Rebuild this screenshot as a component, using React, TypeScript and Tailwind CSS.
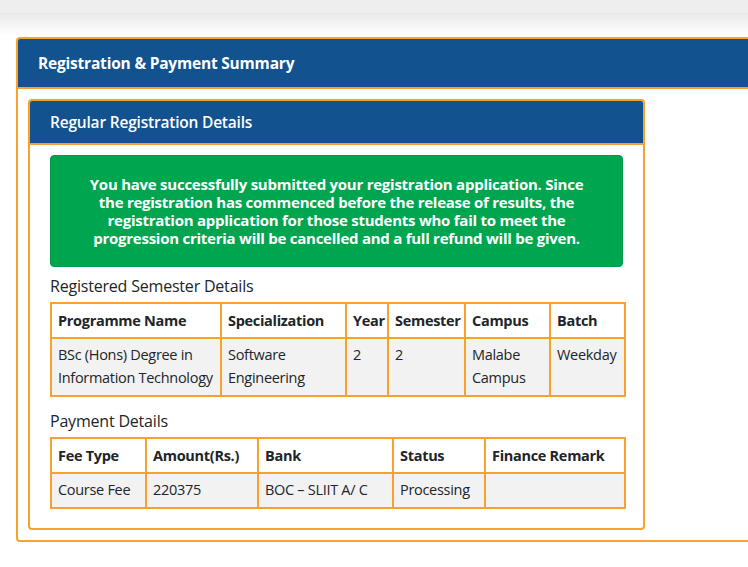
import React from "react"

const ORANGE = "border-[#f8a22c]"

const semesterCols = [
  { label: "Programme Name", w: "w-[170px]" },
  { label: "Specialization", w: "w-[125px]" },
  { label: "Year", w: "w-[42px]" },
  { label: "Semester", w: "w-[77px]" },
  { label: "Campus", w: "w-[85px]" },
  { label: "Batch", w: "w-[75px]" },
]

const paymentCols = [
  { label: "Fee Type", w: "w-[95px]" },
  { label: "Amount(Rs.)", w: "w-[112px]" },
  { label: "Bank", w: "w-[135px]" },
  { label: "Status", w: "w-[92px]" },
  { label: "Finance Remark", w: "w-[140px]" },
]

function Th({ children, w }: { children: React.ReactNode; w: string }) {
  return (
    <th className={`${w} border-2 ${ORANGE} px-[6px] h-[35px] text-left align-middle font-bold bg-white`}>
      {children}
    </th>
  )
}

function Td({ children }: { children?: React.ReactNode }) {
  return (
    <td className={`border-2 ${ORANGE} px-[6px] pt-[4px] pb-[4px] align-top bg-[#f2f2f2] font-normal`}>
      {children}
    </td>
  )
}

export default function App() {
  return (
    <div
      className="w-[748px] h-[567px] overflow-hidden bg-white text-[#212529] text-[14.5px] leading-[23px]"
      style={{ fontFamily: '"Open Sans", "Noto Sans", sans-serif' }}
    >
      {/* top bar */}
      <div className="h-[13px] bg-[#eeeeee]" />
      <div className="h-[22px] bg-gradient-to-b from-[#e9e9e9] to-white" />

      <div className="pt-[2px] pl-[16px]">
        {/* outer card */}
        <div className={`w-[760px] border-2 ${ORANGE} rounded-[4px] overflow-hidden`}>
          <div className={`h-[50px] bg-[#12528f] border-b-2 ${ORANGE} flex items-center px-[20px]`}>
            <span className="text-white font-bold text-[15.5px] tracking-[-0.2px]">
              Registration &amp; Payment Summary
            </span>
          </div>

          <div className="pl-[10px] pt-[10px] pb-[10px]">
            {/* inner card */}
            <div className={`w-[617px] border-2 ${ORANGE} rounded-[4px] overflow-hidden`}>
              <div className={`h-[44px] bg-[#12528f] border-b-2 ${ORANGE} flex items-center px-[20px]`}>
                <span className="text-white font-semibold text-[15.5px] tracking-[-0.2px]">
                  Regular Registration Details
                </span>
              </div>

              <div className="px-[20px] pt-[10px] pb-[19px]">
                <div className="rounded-[4px] bg-[#00a54f] border border-[#00994a] h-[112px] flex items-center justify-center px-[20px]">
                  <p className="text-white font-bold text-[15px] leading-[18px] text-center tracking-[-0.25px]">
                    You have successfully submitted your registration application. Since
                    <br />
                    the registration has commenced before the release of results, the
                    <br />
                    registration application for those students who fail to meet the
                    <br />
                    progression criteria will be cancelled and a full refund will be given.
                  </p>
                </div>

                <div className="mt-[8px] text-[16px] leading-[22px] tracking-[-0.2px]">Registered Semester Details</div>
                <table className="mt-[5px] w-[574px] border-collapse table-fixed tracking-[-0.3px]">
                  <thead>
                    <tr>
                      {semesterCols.map((c) => (
                        <Th key={c.label} w={c.w}>{c.label}</Th>
                      ))}
                    </tr>
                  </thead>
                  <tbody>
                    <tr className="h-[58px]">
                      <Td>BSc (Hons) Degree in Information Technology</Td>
                      <Td>Software Engineering</Td>
                      <Td>2</Td>
                      <Td>2</Td>
                      <Td>Malabe Campus</Td>
                      <Td>Weekday</Td>
                    </tr>
                  </tbody>
                </table>

                <div className="mt-[13px] text-[16px] leading-[22px] tracking-[-0.2px]">Payment Details</div>
                <table className="mt-[5px] w-[574px] border-collapse table-fixed tracking-[-0.3px]">
                  <thead>
                    <tr>
                      {paymentCols.map((c) => (
                        <Th key={c.label} w={c.w}>{c.label}</Th>
                      ))}
                    </tr>
                  </thead>
                  <tbody>
                    <tr className="h-[35px]">
                      <Td>Course Fee</Td>
                      <Td>220375</Td>
                      <Td>BOC – SLIIT A/ C</Td>
                      <Td>Processing</Td>
                      <Td />
                    </tr>
                  </tbody>
                </table>
              </div>
            </div>
          </div>
        </div>
      </div>
    </div>
  )
}
